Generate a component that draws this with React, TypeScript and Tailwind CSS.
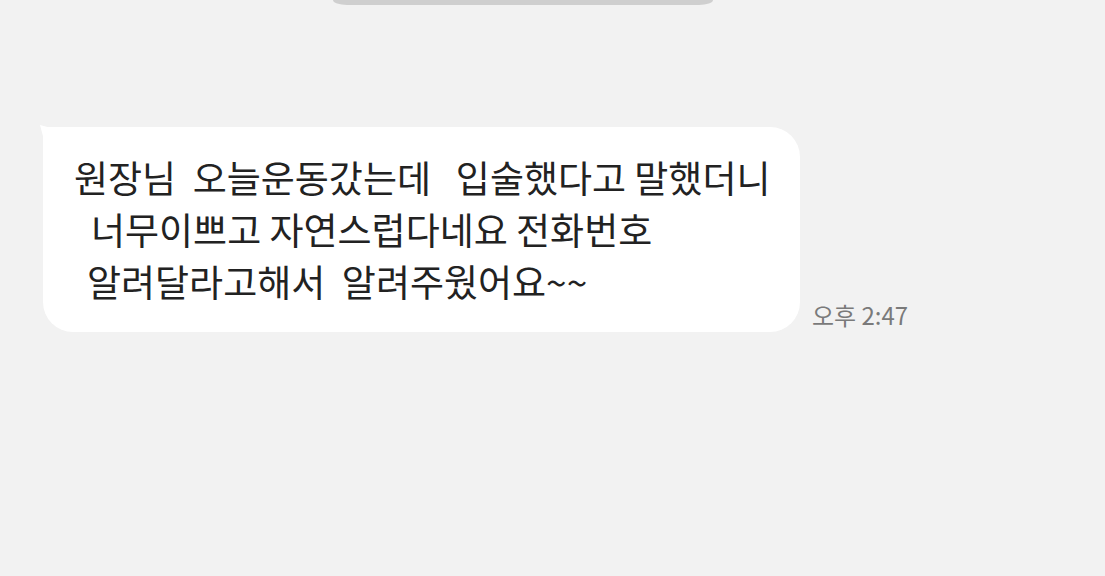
const lines = [
  { text: '원장님  오늘운동갔는데   입술했다고 말했더니', indent: 'pl-0' },
  { text: '너무이쁘고 자연스럽다네요 전화번호', indent: 'pl-[17px]' },
  { text: '알려달라고해서  알려주웠어요~~', indent: 'pl-[13px]' },
];

export default function App() {
  return (
    <div
      className="h-[576px] w-full overflow-hidden bg-[#f2f2f2]"
      style={{ fontFamily: '"Noto Sans CJK KR", "Noto Sans", sans-serif' }}
    >
      {/* date pill cut off at the top */}
      <div className="ml-[333px] h-[5px] w-[380px] rounded-bl-[14px_5px] rounded-br-[14px_5px] bg-[#cfcfcf]" />

      <div className="mt-[122px] ml-[43px] flex items-end gap-3">
        <div className="relative w-[757px] rounded-[30px] rounded-tl-[6px] bg-white pt-6 pb-[25px] pl-[31px]">
          <svg
            className="absolute -top-[3px] -left-[4px]"
            width="18"
            height="18"
            viewBox="0 0 18 18"
          >
            <path d="M1 1 L16 5 L5 16 Z" fill="#ffffff" />
          </svg>
          {lines.map((l, i) => (
            <div
              key={i}
              className={`relative whitespace-pre text-[37px] leading-[52px] text-[#222] ${l.indent}`}
            >
              {l.text}
            </div>
          ))}
        </div>
        <span className="pb-[2px] text-[24px] leading-[30px] text-[#7a7a7a]">
          오후 2:47
        </span>
      </div>
    </div>
  );
}
